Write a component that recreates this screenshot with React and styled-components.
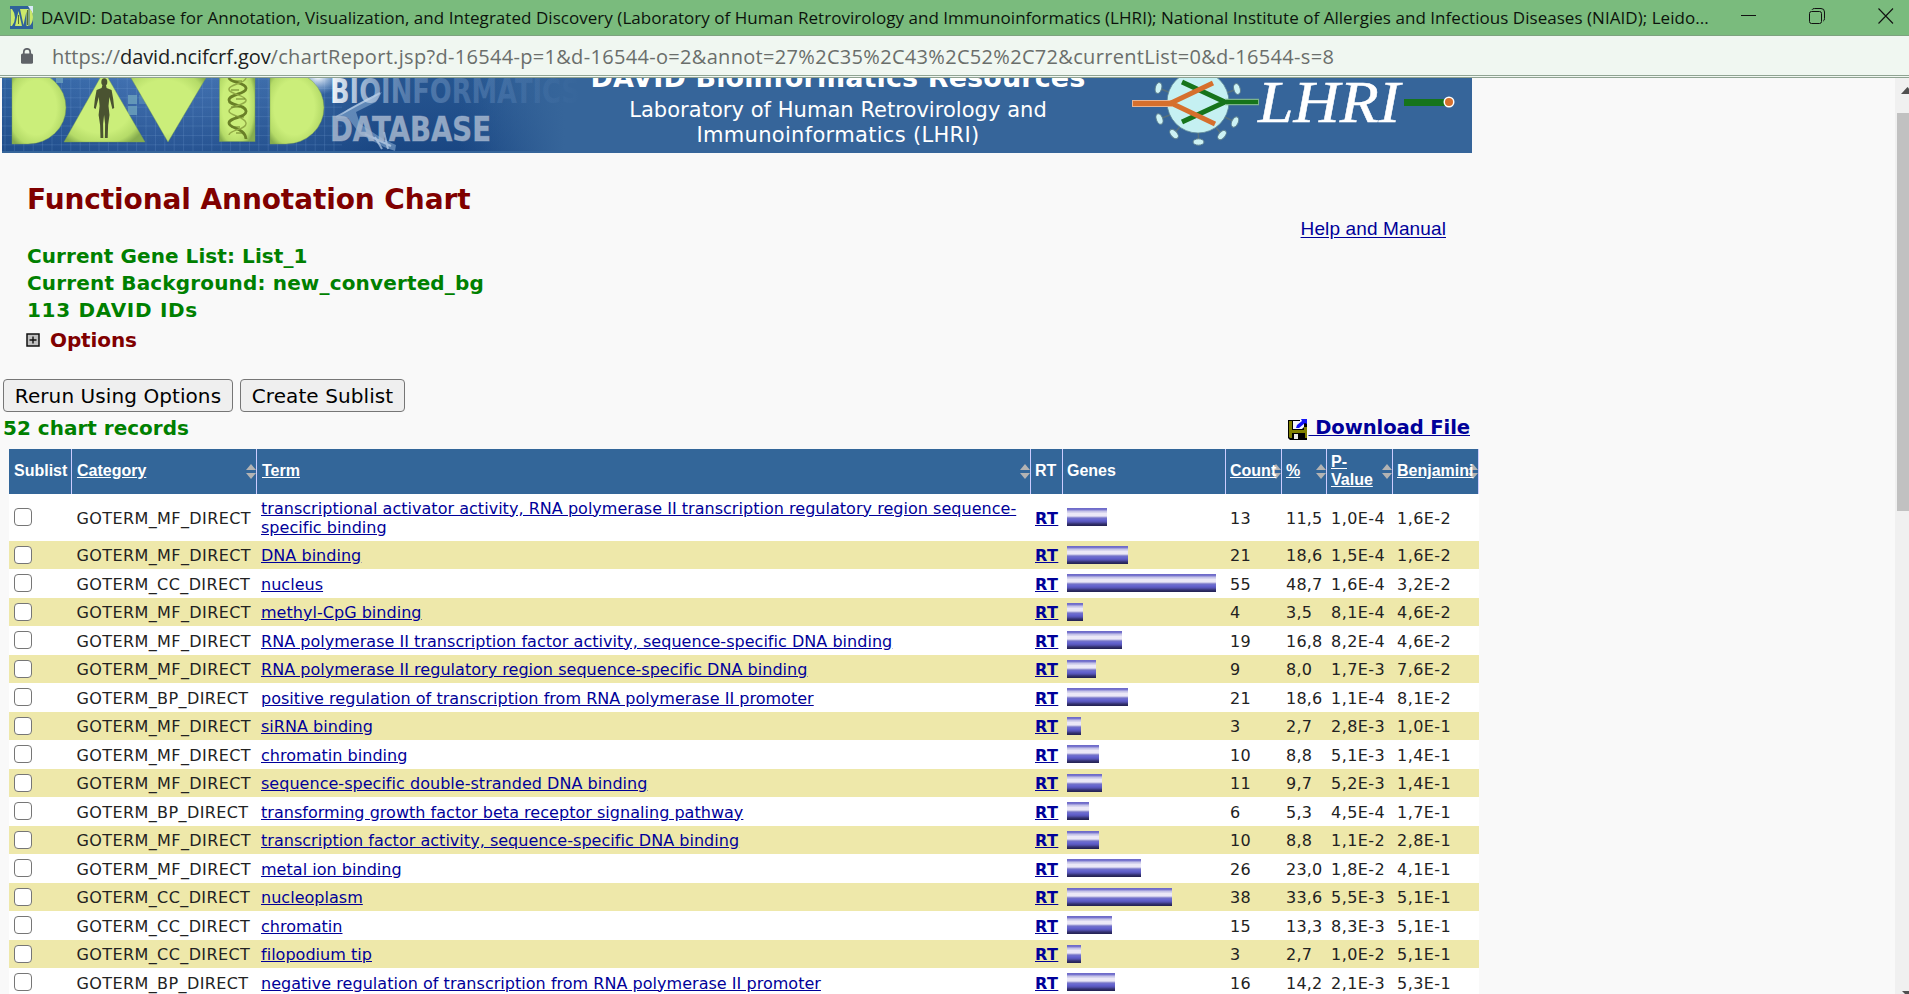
import React from 'react';
import styled, { createGlobalStyle } from 'styled-components';

const verdana = '"DejaVu Sans", Verdana, sans-serif';
const arial = '"Liberation Sans", Arial, sans-serif';
const segoe = '"Open Sans", "Segoe UI", sans-serif';

const GlobalStyle = createGlobalStyle`
  *, *::before, *::after { box-sizing: border-box; }
  html, body { margin: 0; padding: 0; overflow: hidden; background: #f9f9f9; }
`;

const Window = styled.div`
  display: flex;
  flex-direction: column;
  width: 1909px;
  height: 994px;
  overflow: hidden;
  background: #f9f9f9;
  font-family: ${verdana};
`;

/* ---------- browser chrome ---------- */

const TitleBar = styled.header`
  display: flex;
  align-items: center;
  flex: none;
  height: 36px;
  padding: 0 15px 0 10px;
  background: #7abb7d;
  border-bottom: 1px solid #7da37f;
`;

const WindowTitle = styled.span`
  flex: 1;
  margin-left: 7px;
  font: 400 17px/35px ${segoe};
  letter-spacing: 0.038px;
  color: #0c130c;
  white-space: nowrap;
`;

const WindowControls = styled.div`
  display: flex;
  align-items: center;
  gap: 52px;
  padding-bottom: 4px;

  svg { display: block; }
`;

const AddressBar = styled.div`
  display: flex;
  align-items: center;
  flex: none;
  height: 42px;
  padding: 0 20px;
  background: #f0f7f1;
  border-bottom: 3px double #8fa392;
`;

const Url = styled.span`
  margin: 2px 0 0 18px;
  font: 400 20px/38px ${segoe};
  letter-spacing: 0.315px;
  color: #6a6e6b;
  white-space: nowrap;
`;

const Protocol = styled.span`
  letter-spacing: -0.03px;
`;

const Host = styled.span`
  letter-spacing: -0.09px;
  color: #1d1f1e;
`;

const Viewport = styled.div`
  display: flex;
  flex: 1;
  min-height: 0;
`;

const Page = styled.main`
  flex: 1;
  min-width: 0;
  overflow: hidden;
`;

const ScrollTrack = styled.aside`
  display: flex;
  flex-direction: column;
  justify-content: space-between;
  flex: none;
  width: 14px;
  background: #f0f0f0;

  svg { display: block; flex: none; }
`;

const ScrollThumb = styled.div`
  flex: none;
  height: 398px;
  margin: 0 0 auto 2px;
  background: #c1c1c1;
`;

/* ---------- site banner ---------- */

const Banner = styled.div`
  display: flex;
  width: 1470px;
  height: 75px;
  margin-left: 2px;
  overflow: hidden;
  background: #36659a;

  svg { display: block; flex: none; }
`;

const BannerText = styled.div`
  display: flex;
  flex-direction: column;
  align-items: center;
  justify-content: flex-end;
  flex: none;
  width: 500px;
  padding-bottom: 5px;
  color: #fff;
  white-space: nowrap;
`;

const BannerTitle = styled.div`
  margin-bottom: 5px;
  font: 700 27px/30px ${verdana};
  letter-spacing: 0.12px;
`;

const BannerLine = styled.div`
  font: 400 21px/25px ${verdana};
  letter-spacing: ${(p) => p.$track}px;
`;

/* ---------- page head ---------- */

const PageHead = styled.section`
  display: flex;
  justify-content: space-between;
  width: 1446px;
  padding: 30px 0 0 27px;
`;

const Heading = styled.h2`
  margin: 0 0 26px;
  font: 700 28px/34px ${verdana};
  letter-spacing: -0.1px;
  color: maroon;
`;

const ListInfo = styled.div`
  font: 700 20px/27px ${verdana};
  letter-spacing: ${(p) => p.$track}px;
  color: green;
`;

const OptionsToggle = styled.div`
  display: flex;
  align-items: center;
  gap: 10px;
  margin: 3px 0 0 -1px;
  font: 700 20px/27px ${verdana};
  letter-spacing: -0.1px;
  color: maroon;

  svg { display: block; margin-top: -2px; }
`;

const HelpLink = styled.a`
  margin-top: 34px;
  font: 400 19px/24px ${arial};
  letter-spacing: 0.12px;
  color: #000099;
  text-decoration: underline;
  text-underline-offset: 2px;
`;

const Actions = styled.div`
  display: flex;
  gap: 7px;
  padding: 25px 0 0 3px;
`;

const ActionButton = styled.button`
  width: ${(p) => p.$width}px;
  height: 33px;
  padding: 0;
  border: 1px solid #767676;
  border-radius: 4px;
  background: #efefef;
  font: 400 20px/30px ${verdana};
  letter-spacing: 0.08px;
  color: #000;
  white-space: nowrap;
`;

const RecordsBar = styled.div`
  display: flex;
  justify-content: space-between;
  align-items: center;
  width: 1470px;
  height: 26px;
  margin: 3px 0 8px;
  padding-left: 3px;
  font: 700 20px/26px ${verdana};
  color: green;
`;

const DownloadLink = styled.a`
  display: flex;
  align-items: center;
  font-size: 19.6px;
  letter-spacing: -0.1px;
  color: #000099;
  white-space: pre;

  svg { display: block; margin-top: 3px; }
`;

const DownloadLabel = styled.span`
  text-decoration: underline;
`;

/* ---------- chart table ---------- */

const columns = '63px 185px 774px 32px 163px 56px 45px 66px 86px';

const Table = styled.div`
  width: 1470px;
  margin-left: 9px;
`;

const HeaderRow = styled.div`
  display: grid;
  grid-template-columns: ${columns};
  height: 45px;
  background: #336699;
`;

const HeaderCell = styled.div`
  position: relative;
  display: flex;
  align-items: center;
  padding: 0 0 1px ${(p) => p.$indent || 4}px;
  border-right: 1px solid #ccccff;
  font: 700 16px/18px ${arial};
  color: #fff;
`;

const HeaderLabel = styled.span`
  position: relative;
  z-index: 1;
  text-decoration: ${(p) => (p.$sortable ? 'underline' : 'none')};
`;

const SortArrows = styled.svg`
  position: absolute;
  right: 0;
  top: 15px;
`;

const Row = styled.div`
  display: grid;
  grid-template-columns: ${columns};
  height: ${(p) => p.$height}px;
  background: ${(p) => (p.$shaded ? '#eee8aa' : '#ffffff')};
  font-size: 16px;
  line-height: 19px;
  color: #222;
`;

const Cell = styled.div`
  display: flex;
  align-items: center;
  padding: ${(p) => (p.$multiline ? 0 : 1)}px 0 0 ${(p) => p.$indent || 4}px;
  letter-spacing: ${(p) => p.$track || 0}px;
  white-space: ${(p) => (p.$multiline ? 'normal' : 'nowrap')};
`;

const TermLink = styled.a`
  color: #000099;
  letter-spacing: 0.03px;
  text-decoration: underline;
`;

const RelatedLink = styled(TermLink)`
  font-weight: 700;
  letter-spacing: 0.4px;
`;

const Checkbox = styled.input`
  appearance: none;
  width: 18px;
  height: 18px;
  margin: -1.5px 0 0 1px;
  border: 1.5px solid #767676;
  border-radius: 4px;
  background: #fff;
`;

const Bar = styled.div`
  height: 18px;
  margin-top: -1.5px;
  background: linear-gradient(
    #6a66c8 0, #7c79cf 2px, #c9c7ea 3px, #c3c1e6 4px, #ebe8f7 5px, #ebe8f7 8px,
    #b0aede 9px, #7473c9 10px, #6463d0 12px, #5553b4 14px, #33316f 16px, #22204f 18px
  );
`;

/* ---------- drawings ---------- */

const Favicon = () => (
  <svg width="24" height="24" viewBox="0 0 24 24">
    <rect width="23" height="23" fill="#2f6299" />
    <path d="M18 0h5v8z" fill="#d9e9f7" />
    <path d="M.5 3H2q3 4 3 8.500T2 20H.5zM5 20 8.500 5 12 20zM10 3h7l-3.500 16zM16.500 3h2v17h-2zM19.500 3q3.500 2 3.500 8t-3.500 9z" fill="#cbe96a" />
    <path d="M8.500 9v9M17.500 4v15" stroke="#56702f" strokeWidth="1" />
  </svg>
);

const LockIcon = () => (
  <svg width="14" height="16" viewBox="0 0 14 16">
    <rect x="1" y="5.500" width="12" height="10.200" rx="1.500" fill="#5f6368" />
    <path d="M3.800 6V4a3.200 3.200 0 0 1 6.400 0v2" fill="none" stroke="#5f6368" strokeWidth="1.700" />
  </svg>
);

const Controls = () => (
  <WindowControls>
    <svg width="16" height="16"><path d="M0 7.500h15" stroke="#111" /></svg>
    <svg width="17" height="16" fill="none" stroke="#111">
      <rect x="0.500" y="3.500" width="12" height="12" rx="2" />
      <path d="M3 1.800Q3.600.500 5.500.500H12q3.500 0 3.500 3.500v6.500q0 2-1.300 2.600" />
    </svg>
    <svg width="16" height="16"><path d="M.5.5l14.500 15M15 .5.5 15.500" stroke="#111" strokeWidth="1.100" /></svg>
  </WindowControls>
);

const gridX = Array.from({ length: 36 }, (_, i) => 5 + i * 9.4);
const gridY = Array.from({ length: 8 }, (_, i) => 79 + i * 9.4);

const BannerArt = () => (
  <svg width="586" height="75" viewBox="2 78 586 75">
    <defs>
      <linearGradient id="sky" x1="0" x2="1">
        <stop offset="0" stopColor="#2f62a0" />
        <stop offset="0.250" stopColor="#4473b3" />
        <stop offset="0.500" stopColor="#3c6ca9" />
        <stop offset="0.640" stopColor="#265590" />
        <stop offset="0.820" stopColor="#255590" />
        <stop offset="1" stopColor="#36659a" />
      </linearGradient>
      <linearGradient id="depth" x1="0" x2="0" y1="0" y2="1">
        <stop offset="0" stopColor="#173f7c" stopOpacity="0" />
        <stop offset="1" stopColor="#0f3a78" stopOpacity="0.550" />
      </linearGradient>
      <linearGradient id="edge" x1="0" x2="1">
        <stop offset="0.780" stopColor="#36659a" stopOpacity="0" />
        <stop offset="0.960" stopColor="#36659a" />
      </linearGradient>
      <linearGradient id="fade" gradientUnits="userSpaceOnUse" x1="330" x2="580" y1="0" y2="0">
        <stop offset="0" stopColor="#fff" stopOpacity="0.950" />
        <stop offset="0.140" stopColor="#c7d7ea" stopOpacity="0.700" />
        <stop offset="0.300" stopColor="#86a5cb" stopOpacity="0.500" />
        <stop offset="0.700" stopColor="#5d87b9" stopOpacity="0.400" />
        <stop offset="1" stopColor="#5d87b9" stopOpacity="0" />
      </linearGradient>
      <radialGradient id="lime" cx="0.450" cy="0.500" r="0.620">
        <stop offset="0.600" stopColor="#cbee7a" />
        <stop offset="0.850" stopColor="#b5db68" />
        <stop offset="1" stopColor="#86ad4e" />
      </radialGradient>
      <radialGradient id="glow">
        <stop offset="0" stopColor="#fff" />
        <stop offset="1" stopColor="#9fc4ee" stopOpacity="0" />
      </radialGradient>
    </defs>
    <rect x="2" y="78" width="586" height="75" fill="url(#sky)" />
    <rect x="2" y="78" width="586" height="75" fill="url(#depth)" />
    <g stroke="#7ba3d4" strokeOpacity="0.220">
      {gridX.map((x) => <path key={x} d={`M${x} 78V153`} />)}
      {gridY.map((y) => <path key={y} d={`M2 ${y}H342`} />)}
    </g>
    <g fill="#6ea3bd" opacity="0.800">
      <rect x="56" y="78" width="7" height="5" />
      <rect x="128" y="95" width="9" height="9" />
      <rect x="128" y="106" width="9" height="9" />
      <rect x="139" y="95" width="8" height="9" opacity="0.500" />
    </g>
    <ellipse cx="318" cy="77" rx="25" ry="18" fill="url(#glow)" />
    <path d="M336 119 348 109 368 98 382 92 376 102 356 112 360 124 383 139 396 145 395 151 384 147 360 134 348 118z" fill="#9cbde0" opacity="0.500" />
    <path d="M336 117 354 107 380 93M375 137l7 12M384 132l4 17M365 134l26 12" stroke="#d4e5f7" strokeWidth="2" opacity="0.600" fill="none" />
    <rect x="2" y="78" width="586" height="75" fill="url(#edge)" />
    <g fill="url(#lime)" stroke="#7ba150" strokeOpacity="0.400">
      <path d="M12 71H28A38 36.500 0 0 1 28 144H12z" />
      <path d="M104 71 145 142H64z" />
      <path d="M127 71H210L168 142z" />
      <rect x="219.500" y="68" width="35.500" height="73.500" />
      <path d="M270 71H286A38 36.500 0 0 1 286 144H270z" />
    </g>
    <g fill="#4a5331">
      <ellipse cx="104.300" cy="82" rx="3" ry="3.800" />
      <path d="M102.500 85h3.500l.6 3 5 2 1.600 9 1 9-1.800 1-3-12-.9 9 1 9-1.400 10-.4 13h-2.800l.2-14-1-9-1 9 .2 14h-2.800l-.4-13-1.500-10 1-9-.8-9-3.100 12-1.800-1 1-9 1.700-9 5-2z" />
    </g>
    <g fill="none" stroke="#697f27">
      <path d="M229 78c1 5 16 4 17 10s-17 6-17 12 16 4 17 11-17 6-17 12 16 4 17 16" strokeWidth="2.800" />
      <path d="M246 78c-1 6-16 6-17 11s16 6 17 11-17 6-17 11 16 5 17 12-16 6-17 12" strokeWidth="1.500" stroke="#93ab48" />
      <path d="M233 81h9M231 90h8M236 99h9M231 107h9M235 117h9M231 127h9M236 133h8" strokeWidth="1" />
    </g>
    <g fontFamily={verdana} fontWeight="700" fontSize="33.500">
      <text x="330" y="103" fill="url(#fade)" textLength="250" lengthAdjust="spacingAndGlyphs">BIOINFORMATICS</text>
      <text x="330" y="141" fill="#a5b7cf" fillOpacity="0.850" stroke="#a5b7cf" strokeOpacity="0.400" textLength="161" lengthAdjust="spacingAndGlyphs">DATABASE</text>
    </g>
    <rect x="2" y="151" width="586" height="2" fill="#36659a" />
  </svg>
);

const spikes = [
  [1158.5, 88, 15], [1237, 89, -15], [1159.5, 119, -20], [1235, 122, 25],
  [1174, 134, -40], [1222, 135, 40], [1198.5, 142, 90],
];

const LhriLogo = () => (
  <svg width="384" height="75" viewBox="1088 78 384 75">
    <g stroke="#56707c" strokeWidth="1.500">
      {spikes.map(([x, y]) => <path key={x} d={`M${x} ${y}L1198 104`} />)}
    </g>
    {spikes.map(([x, y, r]) => (
      <ellipse key={x} cx={x} cy={y} rx="3.200" ry="5.500" fill="#cdf2f4" stroke="#5f8190" transform={`rotate(${r} ${x} ${y})`} />
    ))}
    <circle cx="1198" cy="102" r="31" fill="#c5f0f2" stroke="#5d8795" strokeWidth="0.800" />
    <g fill="none" strokeWidth="5">
      <path d="M1132 103.500H1172" stroke="#e8b493" strokeWidth="7" />
      <path d="M1182 82 1225 102 1182 122" stroke="#16741b" />
      <path d="M1213 83 1171 103 1215 124" stroke="#d66f2d" />
      <path d="M1133 103.500H1172" stroke="#d66f2d" />
      <path d="M1225 102H1259" stroke="#7bb58a" strokeWidth="6.500" />
      <path d="M1222 102H1258" stroke="#16741b" strokeWidth="4" />
    </g>
    <path d="M1404 102.500H1445" stroke="#16741b" strokeWidth="7" />
    <circle cx="1449" cy="102" r="5.500" fill="#fff" />
    <circle cx="1449" cy="102" r="4" fill="#d66f2d" />
    <text x="1258" y="122" fill="#fff" stroke="#fff" strokeWidth="0.500" fontFamily='"Liberation Serif", serif' fontStyle="italic" fontSize="60" textLength="142" lengthAdjust="spacingAndGlyphs">LHRI</text>
  </svg>
);

const PlusIcon = () => (
  <svg width="14" height="14">
    <rect x="1" y="1" width="12" height="12" fill="#c0c0c0" stroke="#111" strokeWidth="1.500" />
    <path d="M3.500 7h7M7 3.500v7" stroke="#111" strokeWidth="1.400" />
  </svg>
);

const DiskIcon = () => (
  <svg width="20" height="21">
    <path d="M0 1h12v2h7v18H2l-2-2z" fill="#000" />
    <path d="M1 2h3v9h12V8h3v11h-2v-5H4v5H2L1 18z" fill="#808000" />
    <path d="M5 2h11v6l-2 2H5z" fill="#f5f5ff" />
    <path d="M8 9 9 6l5-4-1-2h6v5l-2-1-6 5z" fill="#1414f5" />
    <rect x="6" y="15" width="4" height="5" fill="#e8e8e8" />
    <rect x="11" y="15" width="4" height="5" fill="#000" />
  </svg>
);

const Sort = () => (
  <SortArrows width="10" height="15" viewBox="0 0 10 15">
    <path d="M5 0 10 6H0zM0 9H10L5 15z" fill="#b3b3b3" />
  </SortArrows>
);

/* ---------- data ---------- */

const headers = [
  { label: 'Sublist', indent: 5 },
  { label: 'Category', sortable: true, indent: 5 },
  { label: 'Term', sortable: true, indent: 5 },
  { label: 'RT' },
  { label: 'Genes' },
  { label: 'Count', sortable: true },
  { label: '%', sortable: true },
  { label: 'P-Value', sortable: true, text: <>P-<br />Value</> },
  { label: 'Benjamini', sortable: true },
];

const records = [
  ['MF', 'transcriptional activator activity, RNA polymerase II transcription regulatory region sequence-specific binding', 40, '13', '11,5', '1,0E-4', '1,6E-2'],
  ['MF', 'DNA binding', 61, '21', '18,6', '1,5E-4', '1,6E-2'],
  ['CC', 'nucleus', 149, '55', '48,7', '1,6E-4', '3,2E-2'],
  ['MF', 'methyl-CpG binding', 16, '4', '3,5', '8,1E-4', '4,6E-2'],
  ['MF', 'RNA polymerase II transcription factor activity, sequence-specific DNA binding', 55, '19', '16,8', '8,2E-4', '4,6E-2'],
  ['MF', 'RNA polymerase II regulatory region sequence-specific DNA binding', 29, '9', '8,0', '1,7E-3', '7,6E-2'],
  ['BP', 'positive regulation of transcription from RNA polymerase II promoter', 61, '21', '18,6', '1,1E-4', '8,1E-2'],
  ['MF', 'siRNA binding', 14, '3', '2,7', '2,8E-3', '1,0E-1'],
  ['MF', 'chromatin binding', 32, '10', '8,8', '5,1E-3', '1,4E-1'],
  ['MF', 'sequence-specific double-stranded DNA binding', 35, '11', '9,7', '5,2E-3', '1,4E-1'],
  ['BP', 'transforming growth factor beta receptor signaling pathway', 22, '6', '5,3', '4,5E-4', '1,7E-1'],
  ['MF', 'transcription factor activity, sequence-specific DNA binding', 32, '10', '8,8', '1,1E-2', '2,8E-1'],
  ['MF', 'metal ion binding', 74, '26', '23,0', '1,8E-2', '4,1E-1'],
  ['CC', 'nucleoplasm', 105, '38', '33,6', '5,5E-3', '5,1E-1'],
  ['CC', 'chromatin', 45, '15', '13,3', '8,3E-3', '5,1E-1'],
  ['CC', 'filopodium tip', 14, '3', '2,7', '1,0E-2', '5,1E-1'],
  ['BP', 'negative regulation of transcription from RNA polymerase II promoter', 48, '16', '14,2', '2,1E-3', '5,3E-1'],
];

const rowHeight = (i) => (i === 0 ? 47 : i % 2 ? 28 : 29);

export default function App() {
  return (
    <Window>
      <GlobalStyle />
      <TitleBar>
        <Favicon />
        <WindowTitle>
          DAVID: Database for Annotation, Visualization, and Integrated Discovery (Laboratory of Human Retrovirology and Immunoinformatics (LHRI); National Institute of Allergies and Infectious Diseases (NIAID); Leido...
        </WindowTitle>
        <Controls />
      </TitleBar>
      <AddressBar>
        <LockIcon />
        <Url>
          <Protocol>https://</Protocol>
          <Host>david.ncifcrf.gov</Host>
          /chartReport.jsp?d-16544-p=1&amp;d-16544-o=2&amp;annot=27%2C35%2C43%2C52%2C72&amp;currentList=0&amp;d-16544-s=8
        </Url>
      </AddressBar>
      <Viewport>
        <Page>
          <Banner>
            <BannerArt />
            <BannerText>
              <BannerTitle>DAVID Bioinformatics Resources</BannerTitle>
              <BannerLine $track={0.04}>Laboratory of Human Retrovirology and</BannerLine>
              <BannerLine $track={0.32}>Immunoinformatics (LHRI)</BannerLine>
            </BannerText>
            <LhriLogo />
          </Banner>
          <PageHead>
            <div>
              <Heading>Functional Annotation Chart</Heading>
              <ListInfo $track={0.07}>Current Gene List: List_1</ListInfo>
              <ListInfo $track={0.16}>Current Background: new_converted_bg</ListInfo>
              <ListInfo $track={0.7}>113 DAVID IDs</ListInfo>
              <OptionsToggle>
                <PlusIcon />
                Options
              </OptionsToggle>
            </div>
            <HelpLink>Help and Manual</HelpLink>
          </PageHead>
          <Actions>
            <ActionButton $width={230}>Rerun Using Options</ActionButton>
            <ActionButton $width={165}>Create Sublist</ActionButton>
          </Actions>
          <RecordsBar>
            <span>52 chart records</span>
            <DownloadLink>
              <DiskIcon />
              <DownloadLabel>{' Download File'}</DownloadLabel>
            </DownloadLink>
          </RecordsBar>
          <Table>
            <HeaderRow>
              {headers.map((h) => (
                <HeaderCell key={h.label} $indent={h.indent}>
                  <HeaderLabel $sortable={h.sortable}>{h.text || h.label}</HeaderLabel>
                  {h.sortable && <Sort />}
                </HeaderCell>
              ))}
            </HeaderRow>
            {records.map(([kind, term, bar, count, percent, pValue, benjamini], i) => (
              <Row key={term} $height={rowHeight(i)} $shaded={i % 2 === 1}>
                <Cell><Checkbox type="checkbox" /></Cell>
                <Cell $track={0.4} $indent={4.5}>{`GOTERM_${kind}_DIRECT`}</Cell>
                <Cell $multiline={i === 0}><TermLink>{term}</TermLink></Cell>
                <Cell><RelatedLink>RT</RelatedLink></Cell>
                <Cell><Bar style={{ width: bar }} /></Cell>
                <Cell $track={0.2}>{count}</Cell>
                <Cell $track={0.2}>{percent}</Cell>
                <Cell $track={0.45}>{pValue}</Cell>
                <Cell $track={0.45}>{benjamini}</Cell>
              </Row>
            ))}
          </Table>
        </Page>
        <ScrollTrack>
          <svg width="14" height="35"><path d="M6 16 12.500 9 14 10.500V16z" fill="#505050" /></svg>
          <ScrollThumb />
          <svg width="14" height="3"><path d="M7 0h7v3h-4z" fill="#505050" /></svg>
        </ScrollTrack>
      </Viewport>
    </Window>
  );
}
